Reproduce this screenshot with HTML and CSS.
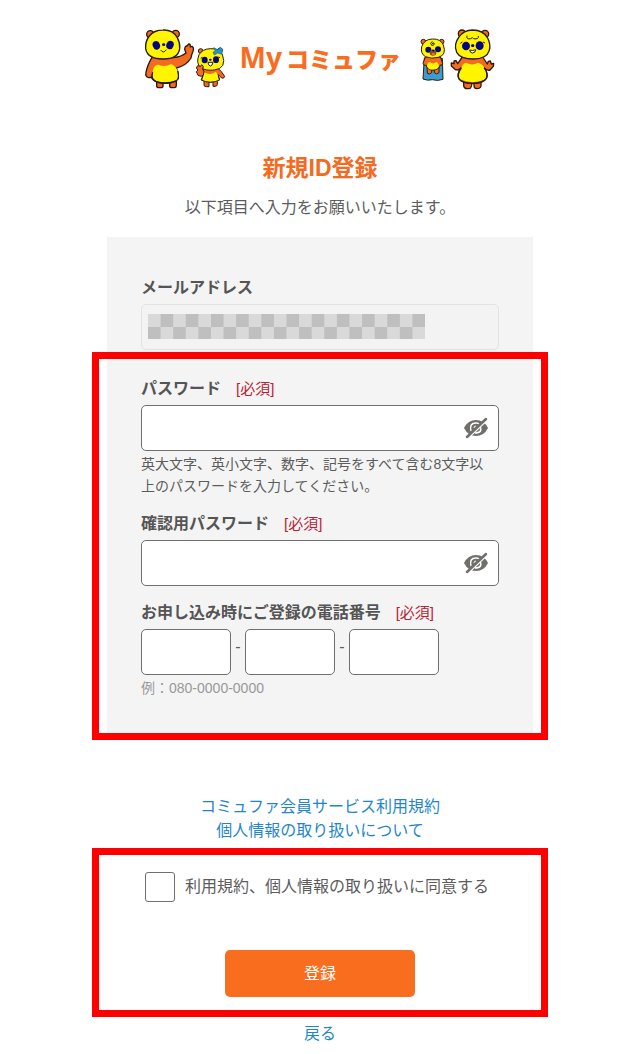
FILE: index.html
```html
<!DOCTYPE html>
<html lang="ja">
<head>
<meta charset="utf-8">
<meta name="viewport" content="width=device-width, initial-scale=1">
<title>新規ID登録 | My コミュファ</title>
<link rel="stylesheet" href="styles.css">
</head>
<body>
<header class="brand">
  <svg class="mascots" viewBox="0 0 300 228" aria-hidden="true">
    <g stroke="#2b1a10" stroke-width="4" stroke-linejoin="round">
      <g fill="#f36b21">
        <circle cx="43" cy="43" r="11"/><circle cx="119" cy="42" r="11"/>
        <path d="M62 180V197Q62 203 69 203H75Q81 203 81 197V184ZM101 184V198Q101 203 108 203H115Q121 203 121 196V178Z"/>
        <path d="M48 112Q34 136 30 157Q27 171 38 173Q48 174 52 162L57 149Q47 166 48 176Q58 190 87 190Q116 190 126 176Q130 163 121 144Q151 137 165 114Q166 106 171 94Q175 83 168 79L163 81Q164 71 158 72L153 78Q147 77 146 88L150 99Q137 110 113 113Z"/>
      </g>
      <path d="M50 155Q53 133 67 134Q86 143 105 132Q121 138 127 158Q131 174 121 181Q89 194 56 182Q45 172 50 155Z" fill="#fff500" stroke="none"/>
      <path d="M50 157Q43 177 60 184Q89 194 120 183Q132 176 125 153" fill="none"/>
      <path d="M81 30Q111 29 124 53Q133 70 131 86Q127 117 82 117Q34 117 29 86Q27 65 40 48Q54 30 81 30Z" fill="#fff500"/>
      <g fill="#f36b21" stroke-width="3">
        <circle cx="194" cy="93" r="7"/><circle cx="252" cy="91" r="7"/>
        <path d="M204 181V195Q204 200 212 200H219V184ZM231 184V199H237Q244 199 244 193V180Z"/>
        <path d="M201 144L203 160L197 178Q208 187 224 187Q240 186 250 178L246 163L257 174Q264 177 266 169Q257 154 246 145Z"/>
        <path d="M199 182Q202 162 205 157Q223 168 240 155Q248 166 249 182Q224 192 199 182Z" fill="#fff500" stroke="none"/>
        <path d="M201 168L195 180Q224 193 251 180L247 167" fill="none"/>
        <path d="M223 86Q249 85 259 103Q274 145 235 150Q210 153 194 143Q179 130 189 104Q199 87 223 86Z" fill="#fff500"/>
        <path d="M185 137L194 139L197 134L202 139L200 147L204 155L202 166L195 169L186 166L181 155L186 150L181 144Z"/>
      </g>
    </g>
    <g fill="#050582"><ellipse cx="61" cy="76" rx="11" ry="13" transform="rotate(-20 61 76)"/><ellipse cx="102" cy="75" rx="11" ry="13" transform="rotate(20 102 75)"/><ellipse cx="206" cy="120" rx="9" ry="10"/><ellipse cx="240" cy="119" rx="9" ry="10"/></g>
    <g fill="none" stroke="#24170c" stroke-width="3"><path d="M74 90Q82 102 91 89M194 115L199 112M252 113L247 111"/></g>
    <ellipse cx="83" cy="74" rx="5" ry="4" fill="#111"/><ellipse cx="223" cy="119" rx="4" ry="3"/>
    <path d="M216 127H231Q229 138 223 138Q216 136 216 127Z" fill="#fff" stroke="#222" stroke-width="3"/>
    <path d="M233 83L245 89L254 82L260 88L257 103L245 99L235 105L231 97L238 93Z" fill="#2494cb" stroke="#17678d" stroke-width="2"/>
  </svg>
  <p class="wordmark"><span class="wordmark-my">My</span><span>コミュファ</span></p>
  <svg class="mascots mascots-right" viewBox="0 0 285 228" aria-hidden="true">
    <g stroke="#2b1a10" stroke-width="4" stroke-linejoin="round">
      <path d="M43 114L39 177Q53 183 67 179Q83 184 99 178L97 115Z" fill="#399dce" stroke-width="3"/>
      <g fill="#f36b21" stroke-width="3">
        <circle cx="40" cy="65" r="7"/><circle cx="95" cy="65" r="7"/>
        <path d="M51 142L52 160Q58 165 65 158V148H73V158Q80 165 87 158V142ZM46 111L39 130Q41 138 49 136Q50 148 69 151Q89 148 90 136Q98 137 98 130L91 111Z"/>
        <path d="M51 138Q53 124 60 127Q70 134 79 126Q87 130 87 139Q83 149 69 149Q53 149 51 138Z" fill="#fff500" stroke="none"/>
        <path d="M68 57Q92 56 100 75Q111 105 85 112Q66 118 46 110Q31 101 35 80Q43 57 68 57Z" fill="#fff500"/>
      </g>
      <g fill="#f36b21">
        <circle cx="156" cy="41" r="11"/><circle cx="225" cy="42" r="11"/>
        <path d="M161 181V196Q162 206 172 206H178Q185 205 186 186ZM191 187L193 202Q195 206 202 206Q215 205 213 193V180Z"/>
        <path d="M157 111L143 131L138 122L132 123L132 131L124 129L124 138L135 148Q144 153 154 143Q140 161 146 175Q156 190 188 190Q219 190 230 174Q235 159 222 143Q231 153 240 150L250 139L251 130L244 132L241 123L235 124L232 132L218 111Z"/>
      </g>
      <path d="M154 145Q158 128 170 129Q187 138 204 128Q220 132 225 148Q235 165 226 178Q188 196 149 177Q142 163 154 145Z" fill="#fff500" stroke="none"/>
      <path d="M154 144Q139 163 148 178Q158 190 188 190Q219 190 229 175Q235 160 222 143" fill="none"/>
      <path d="M188 30Q219 30 233 54Q243 74 238 91Q230 117 190 117Q151 117 140 97Q130 73 147 51Q160 31 188 30Z" fill="#fff500"/>
    </g>
    <g fill="#050582"><ellipse cx="55" cy="89" rx="9" ry="9"/><ellipse cx="84" cy="88" rx="9" ry="9"/><ellipse cx="168" cy="78" rx="12" ry="13"/><ellipse cx="209" cy="77" rx="12" ry="13"/></g>
    <g fill="none" stroke="#24170c" stroke-width="3"><path d="M67 64Q58 70 65 76Q75 76 72 69Q67 67 67 72M171 47Q168 59 182 56Q187 50 191 56Q207 59 205 48M151 70L157 66M225 69L219 66"/></g>
    <ellipse cx="69" cy="98" rx="10" ry="9" fill="#8c4b1b"/><path d="M65 89H74L70 95Z"/><ellipse cx="70" cy="102" rx="5" ry="3" fill="#e37863"/>
    <ellipse cx="188" cy="77" rx="5" ry="4"/>
    <path d="M179 90Q188 94 197 89Q197 98 188 99Q180 99 179 90Z" fill="#fff" stroke="#222" stroke-width="3"/>
  </svg>
</header>

<main class="page">
  <h1 class="title">新規ID登録</h1>
  <p class="intro">以下項目へ入力をお願いいたします。</p>
  <form class="form">
    <div class="panel">
      <div class="field">
        <div class="label-row"><label for="email">メールアドレス</label></div>
        <div class="control">
          <input class="input input-locked" id="email" type="email" readonly>
          <svg class="mosaic" viewBox="0 0 22 2" preserveAspectRatio="none" shape-rendering="crispEdges" aria-hidden="true">
            <defs><pattern id="checks" width="2" height="2" patternUnits="userSpaceOnUse"><path fill="#d9d9d9" d="M0 0h2v2H0z"/><path fill="#bfbfbf" d="M1 0h1v1H1zM0 1h1v1H0z"/></pattern></defs>
            <rect width="22" height="2" fill="url(#checks)"/>
          </svg>
        </div>
      </div>
      <div class="callout callout-fields">
        <div class="field">
          <div class="label-row"><label for="password">パスワード</label><span class="required">[必須]</span></div>
          <div class="control">
            <input class="input" id="password" type="password" autocomplete="new-password">
            <button class="reveal" type="button" aria-label="パスワードを表示">
              <svg class="eye" viewBox="0 0 24 22" aria-hidden="true"><path fill="#706f6c" d="M0 11Q4 3 12 3T24 11Q20 19 12 19T0 11Z"/><path d="M7 14Q5 6 12 6Q14 6 15 7M16 9Q19 16 11 16" fill="none" stroke="#fff" stroke-width="1.5"/><path d="M10 11Q10 9 12 9" fill="none" stroke="#fff" stroke-width="1"/><path d="M4 21L23 3" stroke="#fff" stroke-width="2"/><path d="M3 20L22 2" stroke="#706f6c" stroke-width="2.5" stroke-linecap="round"/></svg>
            </button>
          </div>
          <p class="hint">英大文字、英小文字、数字、記号をすべて含む8文字以<br>上のパスワードを入力してください。</p>
        </div>
        <div class="field">
          <div class="label-row"><label for="confirm">確認用パスワード</label><span class="required">[必須]</span></div>
          <div class="control">
            <input class="input" id="confirm" type="password" autocomplete="new-password">
            <button class="reveal" type="button" aria-label="確認用パスワードを表示">
              <svg class="eye" viewBox="0 0 24 22" aria-hidden="true"><path fill="#706f6c" d="M0 11Q4 3 12 3T24 11Q20 19 12 19T0 11Z"/><path d="M7 14Q5 6 12 6Q14 6 15 7M16 9Q19 16 11 16" fill="none" stroke="#fff" stroke-width="1.5"/><path d="M10 11Q10 9 12 9" fill="none" stroke="#fff" stroke-width="1"/><path d="M4 21L23 3" stroke="#fff" stroke-width="2"/><path d="M3 20L22 2" stroke="#706f6c" stroke-width="2.5" stroke-linecap="round"/></svg>
            </button>
          </div>
        </div>
        <div class="field">
          <div class="label-row"><label for="tel1">お申し込み時にご登録の電話番号</label><span class="required">[必須]</span></div>
          <div class="phone">
            <input class="input" id="tel1" type="tel">
            <span class="dash">-</span>
            <input class="input" type="tel" aria-label="電話番号（中央）">
            <span class="dash">-</span>
            <input class="input" type="tel" aria-label="電話番号（末尾）">
          </div>
          <p class="hint example">例：080-0000-0000</p>
        </div>
      </div>
    </div>

    <nav class="links">
      <a href="#terms">コミュファ会員サービス利用規約</a>
      <a href="#privacy">個人情報の取り扱いについて</a>
    </nav>

    <div class="callout callout-submit">
      <label class="consent"><input class="checkbox" type="checkbox">利用規約、個人情報の取り扱いに同意する</label>
      <button class="submit" type="submit">登録</button>
    </div>
    <a class="back" href="#back">戻る</a>
  </form>
</main>
</body>
</html>
```
FILE: styles.css
```css
* {
  box-sizing: border-box;
}

body {
  margin: 0;
  background: #fff;
  color: #5c5c5c;
  font-family: "Liberation Sans", "Noto Sans CJK JP", sans-serif;
  font-size: 16px;
  line-height: 24px;
}

h1,
p {
  margin: 0;
}

a {
  color: #1f86cc;
  text-decoration: none;
}

.brand {
  display: flex;
  justify-content: center;
  padding-top: 20px;
}

.mascots {
  flex: none;
  width: 100px;
  height: 76px;
}

.mascots-right {
  width: 95px;
}

.wordmark {
  display: flex;
  align-items: baseline;
  gap: 4px;
  width: 174px;
  padding: 17px 0 0 4px;
  color: #f96d1f;
  font-family: "Noto Sans CJK JP", sans-serif;
  font-size: 23px;
  font-weight: 900;
  line-height: 40px;
  white-space: nowrap;
}

.wordmark-my {
  font-family: "Noto Sans", sans-serif;
  font-size: 28px;
  font-weight: 700;
}

.page {
  max-width: 456px;
  margin: 0 auto;
  padding: 56px 0 8px;
}

.title {
  color: #f36b21;
  font-size: 23px;
  line-height: 32px;
  text-align: center;
}

.intro {
  padding-top: 12px;
  text-align: center;
}

.form {
  padding-top: 17px;
}

.panel {
  margin: 0 15px;
  padding: 39px 34px 0;
  background: #f4f4f4;
}

.field + .field {
  margin-top: 15px;
}

.label-row {
  display: flex;
  gap: 15px;
  margin-bottom: 4px;
  color: #555;
  font-weight: 700;
}

.required {
  color: #b91f36;
  font-size: 15px;
  font-weight: 400;
}

.control {
  position: relative;
}

.input {
  display: block;
  width: 100%;
  height: 46px;
  padding: 0 12px;
  border: 1px solid #707070;
  border-radius: 5px;
  background: #fff;
  font: inherit;
}

.input-locked {
  border-color: #e2e2e2;
  background: #f3f3f3;
}

.mosaic {
  position: absolute;
  top: 10px;
  left: 7px;
  width: 277px;
  height: 25px;
}

.reveal {
  position: absolute;
  top: 12px;
  right: 11px;
  width: 24px;
  height: 22px;
  padding: 0;
  border: 0;
  background: none;
}

.eye {
  display: block;
  width: 24px;
  height: 22px;
}

.hint {
  padding-top: 2px;
  font-size: 14px;
  line-height: 22px;
}

.example {
  color: #999;
}

.phone {
  display: flex;
}

.phone .input {
  width: 90px;
}

.dash {
  width: 14px;
  padding-top: 6px;
  text-align: center;
}

.callout {
  border: 7px solid #f00;
}

.callout-fields {
  margin: 2px -49px 0;
  padding: 18px 42px 34px;
}

.links {
  display: flex;
  flex-direction: column;
  align-items: center;
  padding: 55px 0 5px;
}

.callout-submit {
  display: flex;
  flex-direction: column;
  padding: 17px 46px 13px;
}

.consent {
  display: flex;
  align-items: center;
  gap: 10px;
}

.checkbox {
  appearance: none;
  width: 30px;
  height: 30px;
  margin: 0;
  border: 1px solid #707070;
  border-radius: 3px;
  background: #fff;
}

.submit {
  align-self: center;
  width: 190px;
  height: 47px;
  margin-top: 48px;
  border: 0;
  border-radius: 5px;
  background: #f96d1f;
  color: #fff;
  font: inherit;
}

.back {
  display: block;
  padding-top: 5px;
  text-align: center;
}
```
